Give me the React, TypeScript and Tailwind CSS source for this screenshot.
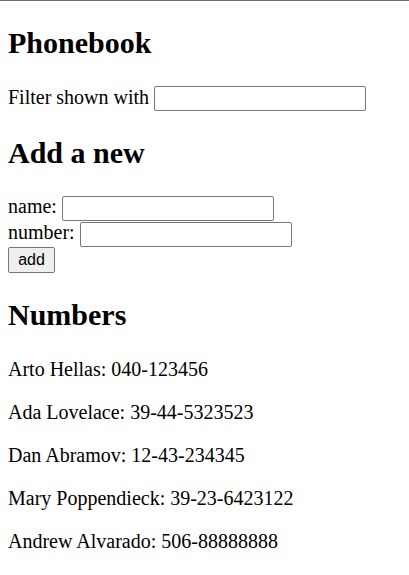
import { useState } from "react";

type Person = { name: string; number: string };

const initial: Person[] = [
  { name: "Arto Hellas", number: "040-123456" },
  { name: "Ada Lovelace", number: "39-44-5323523" },
  { name: "Dan Abramov", number: "12-43-234345" },
  { name: "Mary Poppendieck", number: "39-23-6423122" },
  { name: "Andrew Alvarado", number: "506-88888888" },
];

const inputCls =
  "w-[212px] h-[25px] align-baseline border border-[#767676] rounded-[2px] bg-white px-[3px] py-[2px] text-[16px] font-['Liberation_Sans',Arial,sans-serif] outline-none";

export default function App() {
  const [persons, setPersons] = useState<Person[]>(initial);
  const [newName, setNewName] = useState("");
  const [newNumber, setNewNumber] = useState("");
  const [filter, setFilter] = useState("");

  const shown = persons.filter((p) => p.name.toLowerCase().includes(filter.toLowerCase()));

  const addPerson = (e: React.FormEvent) => {
    e.preventDefault();
    if (!newName) return;
    setPersons(persons.concat({ name: newName, number: newNumber }));
    setNewName("");
    setNewNumber("");
  };

  return (
    <div className="min-h-screen bg-white border-t border-[#6b6b6b] text-black text-[20px] leading-[23px] font-['Liberation_Serif','Times_New_Roman',serif]">
      <div className="px-2">
        <h2 className="mt-[25px] mb-[25px] text-[30px] leading-[34.5px] font-bold">Phonebook</h2>
        <div className="h-[25px]">
          Filter shown with <input className={inputCls} value={filter} onChange={(e) => setFilter(e.target.value)} />
        </div>
        <h2 className="mt-[25px] mb-[25px] text-[30px] leading-[34.5px] font-bold">Add a new</h2>
        <form onSubmit={addPerson}>
          <div className="h-[26px]">
            name: <input className={inputCls} value={newName} onChange={(e) => setNewName(e.target.value)} />
          </div>
          <div className="h-[26px]">
            number: <input className={inputCls} value={newNumber} onChange={(e) => setNewNumber(e.target.value)} />
          </div>
          <div className="h-[26px]">
            <button
              type="submit"
              className="w-[47px] h-[26px] align-baseline bg-[#efefef] border border-[#767676] rounded-[2px] text-[16px] leading-[18px] font-['Liberation_Sans',Arial,sans-serif]"
            >
              add
            </button>
          </div>
        </form>
        <h2 className="mt-[25px] mb-[25px] text-[30px] leading-[34.5px] font-bold">Numbers</h2>
        {shown.map((p) => (
          <p key={p.name} className="my-5">
            {p.name}: {p.number}
          </p>
        ))}
      </div>
    </div>
  );
}
